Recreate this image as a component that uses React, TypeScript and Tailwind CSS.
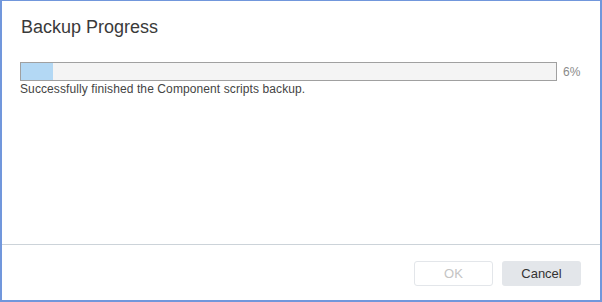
export default function App() {
  const percent = 6
  return (
    <div className="w-[602px] h-[302px] bg-white border-t border-l-2 border-r-2 border-b-2 border-[#7197dc] flex flex-col font-['Liberation_Sans',Arial,sans-serif]">
      {/* Header */}
      <div className="h-[46px] pl-[19px] pt-[15px]">
        <h1 className="text-[18px] leading-[22px] text-[#3a3a3a]">Backup Progress</h1>
      </div>

      {/* Body */}
      <div className="flex-1 pl-[18px] pr-[8px] pt-[15px]">
        <div className="flex items-center">
          <div className="w-[537px] h-[19px] border border-[#a0a0a0] bg-[#f4f4f4]">
            <div className="h-full bg-[#b3d8f4]" style={{ width: `${percent}%` }} />
          </div>
          <span className="ml-[6px] text-[12px] text-[#8a8a8a]">{percent}%</span>
        </div>
        <p className="mt-[1px] text-[12px] leading-[14px] tracking-[0.1px] text-[#444]">
          Successfully finished the Component scripts backup.
        </p>
      </div>

      {/* Footer */}
      <div className="h-[56px] border-t border-[#ccd3d9] flex items-start justify-end gap-[9px] pt-[16px] pr-[19px]">
        <button
          disabled
          className="w-[79px] h-[25px] rounded-[3px] border border-[#e3e6ea] bg-white text-[13px] text-[#c4c4c4]"
        >
          OK
        </button>
        <button className="w-[79px] h-[25px] rounded-[3px] bg-[#e3e6ea] text-[13px] text-[#333]">
          Cancel
        </button>
      </div>
    </div>
  )
}
